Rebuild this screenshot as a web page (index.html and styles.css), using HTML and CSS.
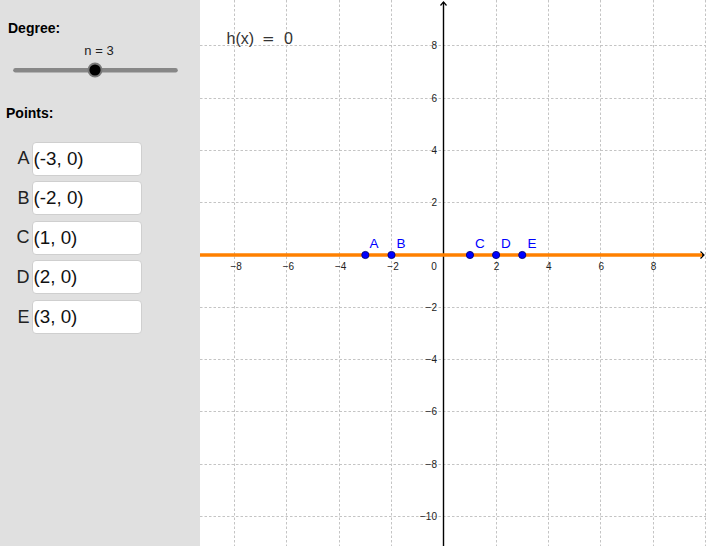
FILE: index.html
```html
<!DOCTYPE html>
<html>
<head>
<meta charset="utf-8">
<link rel="stylesheet" href="styles.css">
</head>
<body>
<div class="app">
  <aside class="panel">
    <div class="heading heading-degree">Degree:</div>
    <div class="slider-value">n = 3</div>
    <svg class="slider" width="200" height="16" viewBox="0 0 200 16">
      <line x1="15.5" y1="8.3" x2="175.5" y2="8.3" class="track"/>
      <circle cx="95" cy="8" r="7.5" class="halo"/>
      <circle cx="95" cy="8" r="5.6" class="knob"/>
    </svg>
    <div class="heading heading-points">Points:</div>
    <div class="rows">
      <div class="row"><span class="pt-label">A</span><div class="box">(-3, 0)</div></div>
      <div class="row"><span class="pt-label">B</span><div class="box">(-2, 0)</div></div>
      <div class="row"><span class="pt-label">C</span><div class="box">(1, 0)</div></div>
      <div class="row"><span class="pt-label">D</span><div class="box">(2, 0)</div></div>
      <div class="row"><span class="pt-label">E</span><div class="box">(3, 0)</div></div>
    </div>
  </aside>
  <main class="graph">
    <svg width="506" height="546" viewBox="0 0 506 546">
      <g class="grid">
        <line x1="34.5" y1="0" x2="34.5" y2="546"/>
        <line x1="86.5" y1="0" x2="86.5" y2="546"/>
        <line x1="139.5" y1="0" x2="139.5" y2="546"/>
        <line x1="191.5" y1="0" x2="191.5" y2="546"/>
        <line x1="296.5" y1="0" x2="296.5" y2="546"/>
        <line x1="348.5" y1="0" x2="348.5" y2="546"/>
        <line x1="400.5" y1="0" x2="400.5" y2="546"/>
        <line x1="453.5" y1="0" x2="453.5" y2="546"/>
        <line x1="505.5" y1="0" x2="505.5" y2="546"/>
        <line x1="0" y1="45.5" x2="506" y2="45.5"/>
        <line x1="0" y1="98.5" x2="506" y2="98.5"/>
        <line x1="0" y1="150.5" x2="506" y2="150.5"/>
        <line x1="0" y1="202.5" x2="506" y2="202.5"/>
        <line x1="0" y1="307.5" x2="506" y2="307.5"/>
        <line x1="0" y1="359.5" x2="506" y2="359.5"/>
        <line x1="0" y1="411.5" x2="506" y2="411.5"/>
        <line x1="0" y1="464.5" x2="506" y2="464.5"/>
        <line x1="0" y1="516.5" x2="506" y2="516.5"/>
      </g>
      <g class="axis">
        <line x1="243.5" y1="2" x2="243.5" y2="546"/>
        <polyline points="240.5,5.5 243.5,2 246.5,5.5" class="arrow"/>
        <line x1="0" y1="255" x2="503" y2="255"/>
        <polyline points="500.5,251.5 504,255 500.5,258.5" class="arrow"/>
      </g>
      <line x1="0" y1="255" x2="502" y2="255" class="func"/>
      <g class="xlabels">
        <text x="36.1" y="269.5">−8</text>
        <text x="88.4" y="269.5">−6</text>
        <text x="140.7" y="269.5">−4</text>
        <text x="193" y="269.5">−2</text>
        <text x="234" y="269.5">0</text>
        <text x="296.6" y="269.5">2</text>
        <text x="348.9" y="269.5">4</text>
        <text x="401.2" y="269.5">6</text>
        <text x="453.5" y="269.5">8</text>
      </g>
      <g class="ylabels">
        <text x="237" y="49.3">8</text>
        <text x="237" y="101.6">6</text>
        <text x="237" y="153.9">4</text>
        <text x="237" y="206.2">2</text>
        <text x="237" y="310.8">−2</text>
        <text x="237" y="363.1">−4</text>
        <text x="237" y="415.4">−6</text>
        <text x="237" y="467.7">−8</text>
        <text x="237" y="520">−10</text>
      </g>
      <g class="points">
        <circle cx="165.35" cy="255" r="3.6"/>
        <circle cx="191.5" cy="255" r="3.6"/>
        <circle cx="269.95" cy="255" r="3.6"/>
        <circle cx="296.1" cy="255" r="3.6"/>
        <circle cx="322.25" cy="255" r="3.6"/>
      </g>
      <g class="plabels">
        <text x="169.5" y="248.3">A</text>
        <text x="196.5" y="248.3">B</text>
        <text x="275" y="248.3">C</text>
        <text x="301" y="248.3">D</text>
        <text x="327.5" y="248.3">E</text>
      </g>
      <text class="fn" y="44"><tspan x="26.5">h(x)</tspan><tspan x="62" class="eq">=</tspan><tspan x="84">0</tspan></text>
    </svg>
  </main>
</div>
</body>
</html>
```
FILE: styles.css
```css
html, body {
  margin: 0;
  padding: 0;
  background: #ffffff;
}
.app {
  display: flex;
  width: 706px;
  height: 546px;
  overflow: hidden;
  font-family: "Liberation Sans", Arial, sans-serif;
}
.panel {
  width: 200px;
  flex: 0 0 200px;
  background: #e0e0e0;
  display: flex;
  flex-direction: column;
}
.heading {
  font-size: 14px;
  font-weight: bold;
  line-height: 16px;
  color: #000;
}
.heading-degree {
  margin-top: 20.4px;
  padding-left: 8px;
}
.slider-value {
  margin-top: 6.6px;
  font-size: 13px;
  line-height: 15px;
  text-align: center;
  color: #222;
  padding-right: 2px;
}
.slider {
  display: block;
  margin-top: 4.3px;
}
.track {
  stroke: #878787;
  stroke-width: 4.6;
  stroke-linecap: round;
}
.halo {
  fill: #7a7a7a;
}
.knob {
  fill: #000;
}
.heading-points {
  margin-top: 26.5px;
  padding-left: 6px;
}
.rows {
  margin-top: 20.9px;
  display: flex;
  flex-direction: column;
  gap: 5.6px;
}
.row {
  display: flex;
  align-items: center;
  height: 34px;
}
.pt-label {
  width: 31.5px;
  text-align: right;
  font-size: 18px;
  color: #222;
  padding-right: 2px;
  box-sizing: border-box;
}
.box {
  width: 110.5px;
  height: 34px;
  box-sizing: border-box;
  background: #fff;
  border: 1px solid #cfcfcf;
  border-radius: 4px;
  display: flex;
  align-items: center;
  padding-left: 1px;
  font-size: 18.8px;
  color: #111;
}
.graph {
  flex: 1 1 auto;
  background: #fff;
}
.graph svg {
  display: block;
}
.grid line {
  stroke: #c4c4c4;
  stroke-width: 1;
  stroke-dasharray: 2.5 2;
}
.axis line {
  stroke: #000;
  stroke-width: 1.4;
}
.arrow {
  fill: none;
  stroke: #000;
  stroke-width: 1.2;
}
.func {
  stroke: #ff8000;
  stroke-width: 3.6;
}
.xlabels text {
  font-family: "Liberation Sans", Arial, sans-serif;
  font-size: 10px;
  text-anchor: middle;
  fill: #222;
}
.ylabels text {
  font-family: "Liberation Sans", Arial, sans-serif;
  font-size: 10px;
  text-anchor: end;
  fill: #222;
}
.points circle {
  fill: #0000ff;
  stroke: #00007a;
  stroke-width: 0.9;
}
.plabels text {
  font-family: "Liberation Sans", Arial, sans-serif;
  font-size: 13.5px;
  fill: #0000ff;
}
.fn {
  font-family: "Liberation Sans", Arial, sans-serif;
  font-size: 16px;
  fill: #333;
}
.eq {
  font-family: "DejaVu Sans", sans-serif;
  font-size: 15px;
}
```
